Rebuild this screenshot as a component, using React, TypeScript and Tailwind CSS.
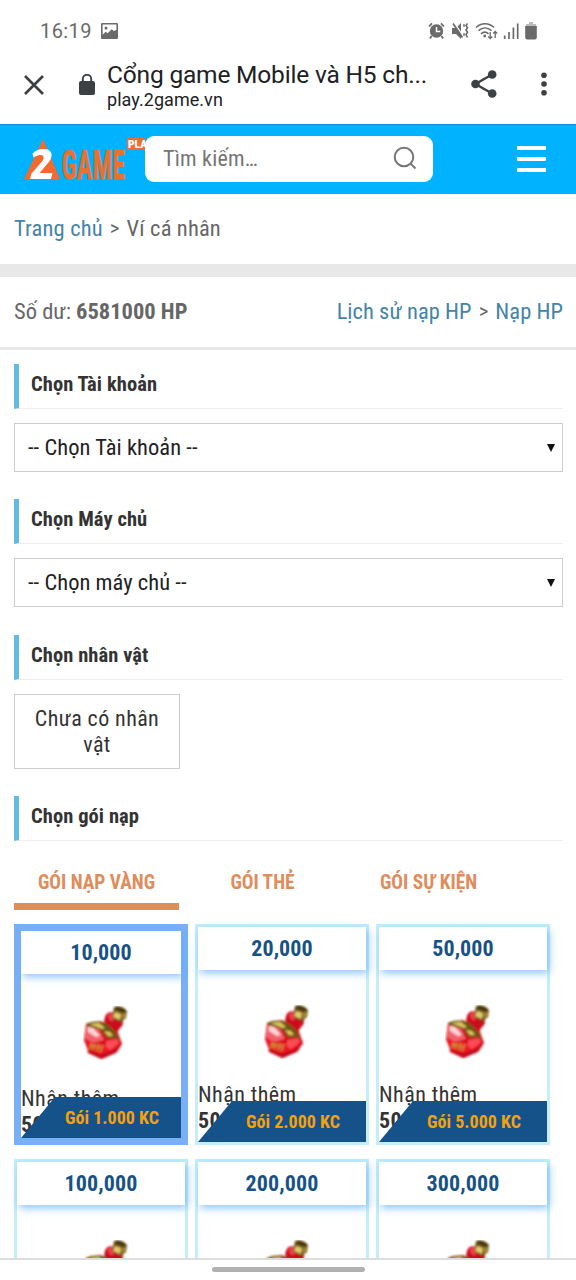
import type { JSX, ReactNode } from 'react';

interface PackageItem {
  price: string;
  label: string;
}

const PACKAGES: PackageItem[] = [
  { price: '10,000', label: 'Gói 1.000 KC' },
  { price: '20,000', label: 'Gói 2.000 KC' },
  { price: '50,000', label: 'Gói 5.000 KC' },
  { price: '100,000', label: 'Gói 10.000 KC' },
  { price: '200,000', label: 'Gói 20.000 KC' },
  { price: '300,000', label: 'Gói 30.000 KC' },
];

const StatusBar = (): JSX.Element => (
  <div className="flex h-[62px] shrink-0 items-center justify-between pl-[40px] pr-[38px] text-[#6a6a6a]">
    <div className="flex items-center gap-[9px]">
      <span className="text-[20px] leading-none tracking-[0.4px]">16:19</span>
      <svg className="h-[16px] w-[17px]" viewBox="0 0 17 16">
        <path
          fill="currentColor"
          fillRule="evenodd"
          d="M1 0h15a1 1 0 0 1 1 1v14a1 1 0 0 1-1 1H1a1 1 0 0 1-1-1V1a1 1 0 0 1 1-1Zm.6 1.5v10.2l3-3 2 1.6 4.2-4.1 2 1.8L15.4 7V1.5ZM5 3.4a1.5 1.5 0 1 1 0 3 1.5 1.5 0 0 1 0-3Z"
        />
      </svg>
    </div>
    <svg className="h-[18px] w-[110px]" viewBox="0 0 110 18" fill="none" stroke="currentColor">
      <circle cx="8.5" cy="9" r="6.7" fill="currentColor" stroke="none" />
      <path d="M1 4.5 4 1.3M16 4.5 13 1.3M3.5 14l-1.5 2.5M13.5 14l1.5 2.5" strokeWidth="1.8" />
      <path d="M8.5 5v4.5h3.8" stroke="#fff" strokeWidth="1.5" />
      <path d="M24 6h4l5-5v16l-5-5h-4Z" fill="currentColor" stroke="none" />
      <path d="m26.3 1 8 12" stroke="#fff" strokeWidth="1.4" />
      <path d="m25 1.5 9.5 14" strokeWidth="1.7" />
      <path d="M39.5 1.5 38 3.5l1.5 2.2L38 8l1.5 2.2-1.5 2.3 1.5 3" strokeWidth="1.6" />
      <path d="M36 2v3m0 6v3" strokeWidth="1.3" />
      <path d="M48 5.500c5-5 13-5 18 0M50.500 8.700c4-3.700 9-3.700 13 0M53 11.800c2.500-2.300 5-2.300 7.500 0" strokeWidth="1.6" />
      <circle cx="56.7" cy="14" r="1.4" fill="currentColor" stroke="none" />
      <path d="M62.2 10v6.5m-2-2 2 2 2-2M67.2 16V9.5m-2 2 2-2 2 2" strokeWidth="1.3" />
      <path d="M76.7 13.5V17M81 10v7M85.4 5.5V17M89.7 1.5V17" strokeWidth="1.7" />
      <path d="M101 0h4v2h3v3h-10V2h3Z" fill="#bbb" stroke="none" />
      <path d="M97.2 4h11.6v11.5a2 2 0 0 1-2 2h-7.6a2 2 0 0 1-2-2Z" fill="currentColor" stroke="none" />
    </svg>
  </div>
);

const BrowserBar = (): JSX.Element => (
  <div className="flex h-[62px] shrink-0 items-center text-[#202124]">
    <svg className="ml-[24px] mt-[-17px] h-[20px] w-[20px]" viewBox="0 0 20 20" stroke="#3c4043" strokeWidth="2.6">
      <path d="m1 1 18 18M19 1 1 19" />
    </svg>
    <svg className="ml-[35px] mt-[-18px] h-[21px] w-[16px]" viewBox="0 0 16 21">
      <rect y="7" width="16" height="14" rx="2" fill="#3c4043" />
      <path d="M3.8 8V5a4.2 4.2 0 0 1 8.4 0v3" fill="none" stroke="#3c4043" strokeWidth="1.9" />
    </svg>
    <div className="ml-[12px] mt-[-14px] w-[340px] whitespace-nowrap">
      <div className="text-[24.5px] leading-[28px] tracking-[-0.18px]">Cổng game Mobile và H5 ch...</div>
      <div className="text-[18px] leading-[22px] tracking-[0.05px]">play.2game.vn</div>
    </div>
    <svg className="ml-[24px] mt-[-18px] h-[28px] w-[26px]" viewBox="0 0 26 28" fill="#3c4043">
      <path d="M21.5 4.3 4.5 14l17 9.7" fill="none" stroke="#3c4043" strokeWidth="2.4" />
      <circle cx="21.2" cy="4.5" r="4.3" />
      <circle cx="4.5" cy="14" r="4.3" />
      <circle cx="21.2" cy="23.5" r="4.3" />
    </svg>
    <svg className="ml-[44px] mt-[-18px] h-[24px] w-[6px]" viewBox="0 0 6 24" fill="#3c4043">
      <circle cx="3" cy="3.3" r="2.8" />
      <circle cx="3" cy="12" r="2.8" />
      <circle cx="3" cy="20.7" r="2.8" />
    </svg>
  </div>
);

const Logo = (): JSX.Element => (
  <svg className="h-[46px] w-[122px] shrink-0" viewBox="0 0 122 46">
    <path d="M20 3 37 43H1Z" fill="#f26a2e" />
    <path
      d="M9.5 17.5C13 14 17 12.800 21 13c5.500.200 8.300 3 7.500 7.500-.500 2.500-1.800 4.500-3.500 6.500L16.500 37h13l-1.500 6H7l1.500-5.500L19 25.500c2.300-2.800 2.300-6-1-6.500-2.500-.300-4.500.500-7.500 2.500Z"
      fill="#fff"
    />
    <text
      x="38.5"
      y="42.5"
      textLength="63.5"
      lengthAdjust="spacingAndGlyphs"
      fontSize="41"
      fontWeight="700"
      fill="#e9702f"
      stroke="#e9702f"
      strokeWidth="0.5"
    >
      GAME
    </text>
    <rect x="104" y="2" width="24" height="12" fill="#f26a2e" />
    <text x="105" y="12.3" fontSize="11.5" fontWeight="900" fill="#fff">
      PLAY
    </text>
  </svg>
);

const SiteHeader = (): JSX.Element => (
  <header className="flex h-[70px] shrink-0 items-center border-t border-[#1093d6] bg-[#00b2ff] pb-[2px] pl-[23px]">
    <Logo />
    <div className="flex h-[46px] w-[288px] items-center justify-between rounded-[9px] bg-white pl-[18px] pr-[16px]">
      <span className="text-[22px] tracking-[0.2px] text-[#757575]">Tìm kiếm…</span>
      <svg className="mt-[-2px] h-[24px] w-[24px]" viewBox="0 0 24 24" fill="none" stroke="#777" strokeWidth="2">
        <circle cx="11" cy="11" r="9.3" />
        <path d="m17.5 17.5 5 5" />
      </svg>
    </div>
    <div className="ml-[84px] flex flex-col gap-[7px]">
      <span className="h-[4px] w-[29px] rounded-[1px] bg-white" />
      <span className="h-[4px] w-[29px] rounded-[1px] bg-white" />
      <span className="h-[4px] w-[29px] rounded-[1px] bg-white" />
    </div>
  </header>
);

const SectionTitle = ({ children }: { children: ReactNode }): JSX.Element => (
  <h2 className="flex h-[45px] items-center border-b border-l-[5px] border-[#eee] border-l-[#62bbe5] pb-[4px] pl-[12px] text-[20.5px] font-bold tracking-[0.08px] text-[#333]">
    {children}
  </h2>
);

const SelectBox = ({ label }: { label: string }): JSX.Element => (
  <div className="mt-[14px] flex h-[49px] items-center justify-between border border-[#ccc] pl-[13px] pr-[7px] text-[22.5px] tracking-[0.04px] text-[#222]">
    <span>{label}</span>
    <svg className="h-[8px] w-[8px]" viewBox="0 0 8 8">
      <path d="M0 0h8L4 8Z" fill="#111" />
    </svg>
  </div>
);

const Potion = (): JSX.Element => (
  <svg className="h-[54px] w-[46px]" viewBox="0 0 46 54">
    <filter id="soften">
      <feGaussianBlur stdDeviation="0.8" />
    </filter>
    <g filter="url(#soften)">
      <path d="M22 11c1-4 5-6 9-4l8 6c2 3 1 7-2 9l-4 6-11-8c-1-3-1-6 0-9Z" fill="#c90a1e" />
      <path d="M25 9c3-3 6-2 8 1l-3 5c-3 1-5-2-5-6Z" fill="#f4414b" />
      <path d="M3 18 18 15l16 9 5 14-5 8-15 7-13-6-5-13Z" fill="#d20a1b" />
      <path d="m3 20 12 2 6 12-11 3-9-5Z" fill="#f2606b" />
      <path d="m5 21 5 1 7 8-4 1-8-5Z" fill="#ffd6d6" />
      <path d="m1 34 11 3 13 2 13-5-5 9-14 6L5 43Z" fill="#ee1828" />
      <path d="m23 35 11-2 2 4-9 7-4-3Z" fill="#fb4c55" />
      <path d="m4 45 13 4 18-7-2 5-15 6-13-6Z" fill="#c0091c" />
      <path d="M3 18c5-3 11-3 16-2 9 3 14 10 18 19l-5-3-8 0-6-8-14-4Z" fill="#6d5414" />
      <path d="m6 18 10-1 6 5-3 1ZM21 25l6 1 3 4-5 0Z" fill="#dfc65e" />
      <path d="M31 1c4-2 10 0 13 4l-1 7-5 4-9-4Z" fill="#6b5215" />
      <path d="m32 6 6 2-1 6-7-3Z" fill="#e2c96d" />
      <path d="m39 8 4-1-1 4-3 3Z" fill="#a98a34" />
      <path d="m33 2 9 3" stroke="#2d2407" strokeWidth="2" />
      <path d="m9 37-2 6m5-5-2 6m6-6-2 7m6-6-3 7M7 39l12 3" stroke="#c98a34" strokeWidth="1.7" />
    </g>
  </svg>
);

const PackageCard = ({ item, selected }: { item: PackageItem; selected: boolean }): JSX.Element => (
  <div
    className={`relative h-[221px] w-[174px] ${
      selected ? 'border-[7px] border-[#79aff5]' : 'border-[3px] border-[#c5eefa]'
    }`}
  >
    <div className="flex h-[43px] items-center justify-center bg-white text-[22px] font-bold tracking-[0.1px] text-[#175287] shadow-[2px_3px_8px_rgba(100,175,255,0.75)]">
      {item.price}
    </div>
    <div className={selected ? 'mt-[32px] flex justify-center pl-[9px]' : 'mt-[35px] flex justify-center pl-[9px]'}>
      <Potion />
    </div>
    <div
      className={`text-[22px] leading-[26px] tracking-[0.45px] text-[#333] ${selected ? 'mt-[26px] h-[52px] overflow-hidden' : 'mt-[23px]'}`}
    >
      <div>Nhận thêm</div>
      <div className="font-bold">50%</div>
    </div>
    <div className="absolute bottom-0 right-0 flex h-[41px] w-full items-center justify-center bg-[#15528a] pl-[22px] text-[18px] font-bold tracking-[0.03px] text-[#f5a00f] [clip-path:polygon(34px_0,100%_0,100%_100%,0_100%)]">
      {item.label}
    </div>
  </div>
);

export default function App(): JSX.Element {
  return (
    <div className="flex h-[1280px] w-[576px] flex-col overflow-hidden bg-white font-['Roboto',sans-serif]">
      <StatusBar />
      <BrowserBar />
      <div className="flex min-h-0 flex-1 flex-col overflow-hidden font-['Roboto_Condensed','Roboto',sans-serif] font-stretch-condensed">
        <SiteHeader />
        <nav className="flex h-[70px] shrink-0 items-center gap-[7px] pl-[14px] text-[22.5px] tracking-[0.15px] text-[#666]">
          <span className="text-[#4484a8]">Trang chủ</span>
          <span className="text-[21px]">&gt;</span>
          <span>Ví cá nhân</span>
        </nav>
        <div className="h-[13px] shrink-0 bg-[#e8e8e8]" />
        <div className="flex h-[73px] shrink-0 items-center justify-between border-b-[3px] border-[#e7e7e7] pl-[14px] pr-[13px] text-[22.5px] text-[#666]">
          <span>
            Số dư: <b>6581000 HP</b>
          </span>
          <span className="flex items-center gap-[7px] tracking-[0.04px] text-[#4484a8]">
            <span>Lịch sử nạp HP</span>
            <span className="text-[21px] text-[#666]">&gt;</span>
            <span>Nạp HP</span>
          </span>
        </div>
        <main className="shrink-0 pl-[14px] pr-[13px] pt-[14px]">
          <SectionTitle>Chọn Tài khoản</SectionTitle>
          <SelectBox label="-- Chọn Tài khoản --" />
          <div className="h-[27px]" />
          <SectionTitle>Chọn Máy chủ</SectionTitle>
          <SelectBox label="-- Chọn máy chủ --" />
          <div className="h-[28px]" />
          <SectionTitle>Chọn nhân vật</SectionTitle>
          <div className="mt-[14px] flex h-[75px] w-[166px] items-center justify-center border border-[#ccc] px-[15px] text-center text-[22px] leading-[26px] tracking-[0.4px] text-[#333]">
            Chưa có nhân vật
          </div>
          <div className="h-[27px]" />
          <SectionTitle>Chọn gói nạp</SectionTitle>
          <div className="mt-[14px] flex h-[55px] text-[19.4px] font-bold text-[#e08c5b]">
            <div className="flex h-full w-[165px] items-center justify-center border-b-[7px] border-[#e08c5b] pt-[8px]">GÓI NẠP VÀNG</div>
            <div className="flex w-[167px] items-center justify-center pt-[1px]">GÓI THẺ</div>
            <div className="flex w-[165px] items-center justify-center pt-[1px]">GÓI SỰ KIỆN</div>
          </div>
          <div className="mt-[14px] grid grid-cols-[174px_174px_174px] gap-x-[7px] gap-y-[14px]">
            {PACKAGES.map((item, index) => (
              <PackageCard key={item.price} item={item} selected={index === 0} />
            ))}
          </div>
        </main>
      </div>
      <div className="flex h-[22px] shrink-0 justify-center border-t-2 border-[#ddd] bg-white pt-[7px]">
        <div className="h-[5px] w-[153px] rounded-full bg-[#b0b0b0]" />
      </div>
    </div>
  );
}
